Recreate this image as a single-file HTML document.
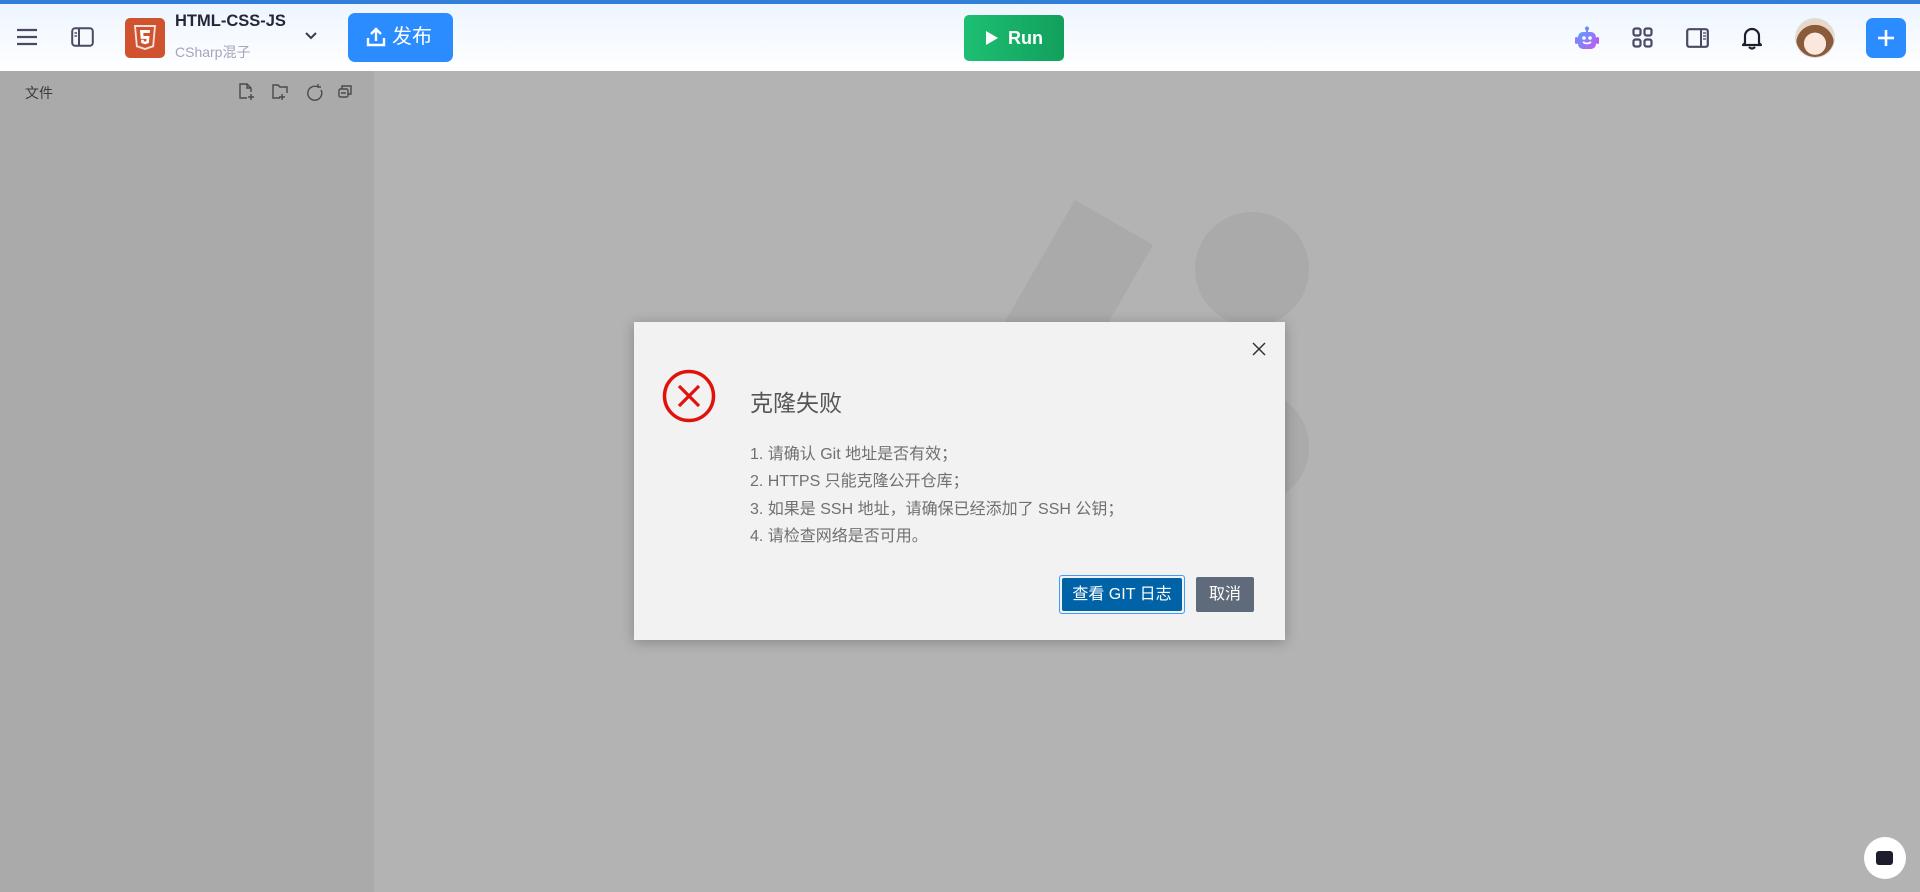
<!DOCTYPE html>
<html><head><meta charset="utf-8">
<style>
*{margin:0;padding:0;box-sizing:border-box}
body{width:1920px;height:892px;overflow:hidden;font-family:"Liberation Sans","Noto Sans CJK SC",sans-serif;background:#b3b3b3;position:relative}
.abs{position:absolute}
.hdr{left:0;top:0;width:1920px;height:71px;background:linear-gradient(#edf5ff,#fff);border-top:4px solid #2f7fd8}
.side{left:0;top:71px;width:374px;height:821px;background:#aaaaaa}
.dlg{left:634px;top:322px;width:651px;height:318px;background:#f2f2f2;box-shadow:0 2px 12px rgba(0,0,0,.25)}
.li{left:116px;font-size:16px;color:#707070;white-space:nowrap}
</style></head><body>
<div class="abs hdr"></div>
<svg class="abs" style="left:16px;top:28px" width="22" height="18"><g stroke="#4a4a63" stroke-width="2.2"><line x1="1" y1="2" x2="21" y2="2"/><line x1="1" y1="9" x2="21" y2="9"/><line x1="1" y1="16" x2="21" y2="16"/></g></svg>
<svg class="abs" style="left:71px;top:27px" width="23" height="20"><rect x="1.2" y="1.2" width="20.6" height="17.6" rx="3" fill="none" stroke="#4a4a63" stroke-width="2"/><line x1="8" y1="1" x2="8" y2="19" stroke="#4a4a63" stroke-width="2"/><g stroke="#4a4a63" stroke-width="1.5"><line x1="3.5" y1="6" x2="6" y2="6"/><line x1="3.5" y1="9" x2="6" y2="9"/></g></svg>
<div class="abs" style="left:125px;top:18px;width:40px;height:40px;background:#d0532f;border-radius:5px"></div>
<svg class="abs" style="left:133px;top:24px" width="24" height="28" viewBox="0 0 24 28"><path d="M1 1h22l-2 22-9 3-9-3z" fill="#f7e3dc"/><path d="M3 3h18l-1.7 18.5L12 24l-7.3-2.5z" fill="#d0532f"/><path d="M7 6h10l-.3 3H10.3l.2 3h6l-.6 7L12 20.2 8.3 19l-.3-3.2h2.8l.1 1.4 1.1.4 1.3-.4.2-2.3H7.7z" fill="#fff"/></svg>
<div class="abs" style="left:175px;top:12px;font-size:16.5px;font-weight:bold;color:#26263a">HTML-CSS-JS</div>
<div class="abs" style="left:175px;top:42px;font-size:14px;color:#a4a4bc">CSharp混子</div>
<svg class="abs" style="left:304px;top:31px" width="14" height="10"><path d="M2 2l5 5 5-5" fill="none" stroke="#3a3a50" stroke-width="2"/></svg>
<div class="abs" style="left:348px;top:13px;width:105px;height:49px;background:#2b8cff;border-radius:7px;color:#fff;font-size:20px;line-height:49px;padding-left:44px">发布</div>
<svg class="abs" style="left:366px;top:27px" width="20" height="20"><g fill="none" stroke="#fff" stroke-width="2.4"><path d="M2 11v7h16v-7"/><path d="M10 14V2M5 7l5-5 5 5"/></g></svg>
<div class="abs" style="left:964px;top:15px;width:100px;height:46px;background:linear-gradient(90deg,#1dbf73,#12a05c);border-radius:5px;color:#fff;font-size:18px;font-weight:bold;line-height:46px;padding-left:44px">Run</div>
<svg class="abs" style="left:985px;top:30px" width="14" height="16"><path d="M1 1l12 7-12 7z" fill="#fff"/></svg>
<svg class="abs" style="left:1574px;top:26px" width="26" height="24"><defs><linearGradient id="g" x1="0" y1="0" x2="1" y2="1"><stop offset="0" stop-color="#5a9cff"/><stop offset="1" stop-color="#c05cf0"/></linearGradient></defs><circle cx="13" cy="2.5" r="2" fill="#6a8cff"/><rect x="12" y="3" width="2" height="4" fill="#6a8cff"/><rect x="4" y="6" width="18" height="17" rx="5" fill="url(#g)"/><rect x="1" y="11" width="3" height="7" rx="1.5" fill="#8a7cff"/><rect x="22" y="11" width="3" height="7" rx="1.5" fill="#b060f0"/><circle cx="10" cy="12" r="1.8" fill="#fff"/><circle cx="16" cy="12" r="1.8" fill="#fff"/><path d="M9 16q4 3 8 0" stroke="#fff" stroke-width="1.8" fill="none"/></svg>
<svg class="abs" style="left:1632px;top:27px" width="21" height="21"><g fill="none" stroke="#4a4a63" stroke-width="2.2"><rect x="1.5" y="1.5" width="7" height="7" rx="2"/><rect x="12.5" y="1.5" width="7" height="7" rx="2"/><rect x="1.5" y="12.5" width="7" height="7" rx="2"/><rect x="12.5" y="12.5" width="7" height="7" rx="2"/></g></svg>
<svg class="abs" style="left:1686px;top:28px" width="23" height="20"><rect x="1.2" y="1.2" width="20.6" height="17.6" rx="2" fill="none" stroke="#4a4a63" stroke-width="2.2"/><line x1="15" y1="1" x2="15" y2="19" stroke="#4a4a63" stroke-width="2"/><g stroke="#4a4a63" stroke-width="1.3"><line x1="17" y1="5" x2="20" y2="5"/><line x1="17" y1="8" x2="20" y2="8"/><line x1="17" y1="11" x2="20" y2="11"/></g></svg>
<svg class="abs" style="left:1742px;top:26px" width="20" height="24"><path d="M3 17V10a7 7 0 0 1 14 0v7l2 2H1z" fill="none" stroke="#1d1d2e" stroke-width="2.2" stroke-linejoin="round"/><path d="M7 21q3 3 6 0" fill="none" stroke="#1d1d2e" stroke-width="2.2"/></svg>
<div class="abs" style="left:1795px;top:18px;width:40px;height:40px;border-radius:50%;background:radial-gradient(circle at 50% 65%,#fbe7dc 0 35%,#8a5a3a 36% 60%,#e9d8c8 61%);border:1px solid #ddd"></div>
<div class="abs" style="left:1866px;top:18px;width:40px;height:40px;background:#2b8cff;border-radius:7px"></div>
<svg class="abs" style="left:1877px;top:29px" width="18" height="18"><g stroke="#fff" stroke-width="2.6"><line x1="9" y1="1" x2="9" y2="17"/><line x1="1" y1="9" x2="17" y2="9"/></g></svg>
<div class="abs side"></div>
<div class="abs" style="left:25px;top:83px;font-size:14px;color:#3a3a3a">文件</div>
<svg class="abs" style="left:238px;top:82px" width="120" height="20"><g fill="none" stroke="#4a4a4a" stroke-width="1.4"><path d="M9 16H2V2h7l4 4v4M9 2v4h4M13 12v6M10 15h6"/><path d="M42 16h-7V3h5l2 2h7v6M44 12v6M41 15h6"/><path d="M80 5a7 7 0 1 0 3 3M80 2v3h3"/><rect x="101" y="7" width="9" height="8" rx="1.5"/><path d="M104 7V4h9v8h-3M103 11h5"/></g></svg>
<svg class="abs" style="left:0;top:0" width="1920" height="892"><polygon points="1075,200 1153,245 1000,510 922,465" fill="#aaaaaa"/><circle cx="1252" cy="269" r="57" fill="#aaaaaa"/><circle cx="1252" cy="447" r="57" fill="#aaaaaa"/></svg>
<div class="abs dlg">
<svg class="abs" style="left:618px;top:20px" width="14" height="14"><g stroke="#333" stroke-width="1.5"><line x1="1" y1="1" x2="13" y2="13"/><line x1="13" y1="1" x2="1" y2="13"/></g></svg>
<svg class="abs" style="left:28px;top:47px" width="54" height="54"><circle cx="27" cy="27" r="24.5" fill="none" stroke="#e0130b" stroke-width="3.5"/><g stroke="#e0130b" stroke-width="3.2"><line x1="17" y1="17" x2="37" y2="37"/><line x1="37" y1="17" x2="17" y2="37"/></g></svg>
<div class="abs" style="left:116px;top:62px;font-size:23px;color:#555">克隆失败</div>
<div class="abs li" style="top:118px">1. 请确认 Git 地址是否有效；</div>
<div class="abs li" style="top:145px">2. HTTPS 只能克隆公开仓库；</div>
<div class="abs li" style="top:173px">3. 如果是 SSH 地址，请确保已经添加了 SSH 公钥；</div>
<div class="abs li" style="top:200px">4. 请检查网络是否可用。</div>
<div class="abs" style="left:425px;top:253px;width:126px;height:39px;border:1px solid #3b9cff;border-radius:3px;padding:2px"><div style="width:100%;height:100%;background:#0063a8;border-radius:2px;color:#fff;font-size:16px;line-height:33px;text-align:center">查看 GIT 日志</div></div>
<div class="abs" style="left:562px;top:255px;width:58px;height:35px;background:#5f6b7a;border-radius:2px;color:#fff;font-size:16px;line-height:35px;text-align:center">取消</div>
</div>
<div class="abs" style="left:1864px;top:837px;width:42px;height:42px;border-radius:50%;background:#fff"></div>
<div class="abs" style="left:1876px;top:851px;width:17px;height:14px;border-radius:3px;background:#1d1d2e"></div>
</body></html>
